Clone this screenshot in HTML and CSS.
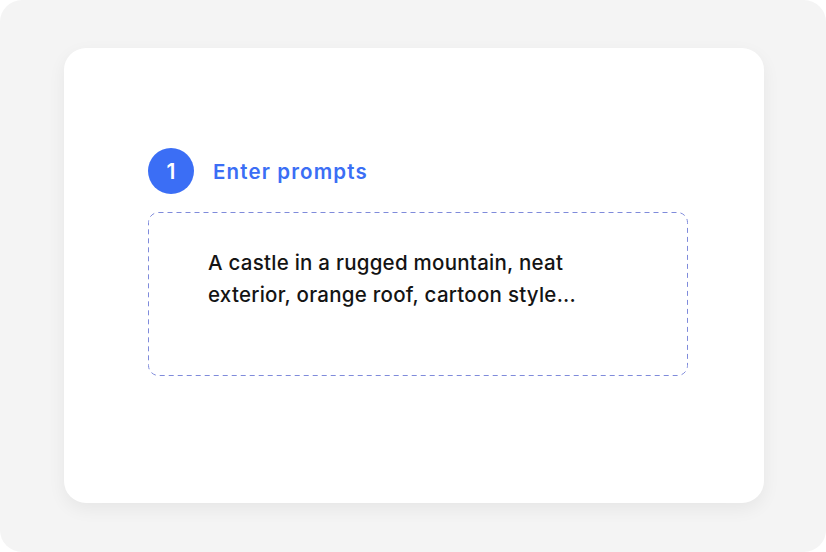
FILE: index.html
```html
<!DOCTYPE html>
<html>
<head>
<meta charset="utf-8">
<link rel="stylesheet" href="styles.css">
</head>
<body>
<div class="frame">
  <div class="card">
    <div class="step">
      <div class="num">1</div>
      <div class="title">Enter prompts</div>
    </div>
    <div class="prompt">
      <svg class="dash" width="540" height="164" viewBox="0 0 540 164" aria-hidden="true">
        <rect x="0.5" y="0.5" width="539" height="163" rx="10" ry="10" fill="none" stroke="#7f8bdb" stroke-width="1" stroke-dasharray="5 4"/>
      </svg>
      <p>A castle in a rugged mountain, neat<br>exterior, orange roof, cartoon style...</p>
    </div>
  </div>
</div>
</body>
</html>
```
FILE: styles.css
```css
html, body { margin: 0; padding: 0; background: #ffffff; }
body { font-family: Inter, "Noto Sans", sans-serif; }
.frame {
  width: 826px;
  height: 552px;
  background: #f4f4f4;
  border-radius: 22px;
  padding: 48px 62px 49px 64px;
  box-sizing: border-box;
}
.card {
  width: 700px;
  height: 455px;
  background: #ffffff;
  border-radius: 22px;
  box-shadow: 0 6px 18px rgba(0,0,0,0.06);
  box-sizing: border-box;
  padding: 100px 76px 0 84px;
}
.step {
  display: flex;
  align-items: center;
  gap: 19px;
  height: 46px;
}
.num {
  width: 46px;
  height: 46px;
  border-radius: 50%;
  background: #3b6ef5;
  color: #fff;
  font-weight: 600;
  font-size: 21px;
  display: flex;
  align-items: center;
  justify-content: center;
}
.title {
  color: #3b6ef5;
  font-weight: 600;
  font-size: 20.5px;
  letter-spacing: 1.15px;
}
.prompt {
  position: relative;
  margin-top: 18px;
  width: 540px;
  height: 164px;
  box-sizing: border-box;
  padding: 35px 0 0 60px;
}
.dash {
  position: absolute;
  left: 0;
  top: 0;
}
.prompt p {
  position: relative;
  margin: 0;
  font-size: 20.5px;
  line-height: 32px;
  color: #141414;
  font-weight: 500;
  letter-spacing: 0.25px;
}
```
